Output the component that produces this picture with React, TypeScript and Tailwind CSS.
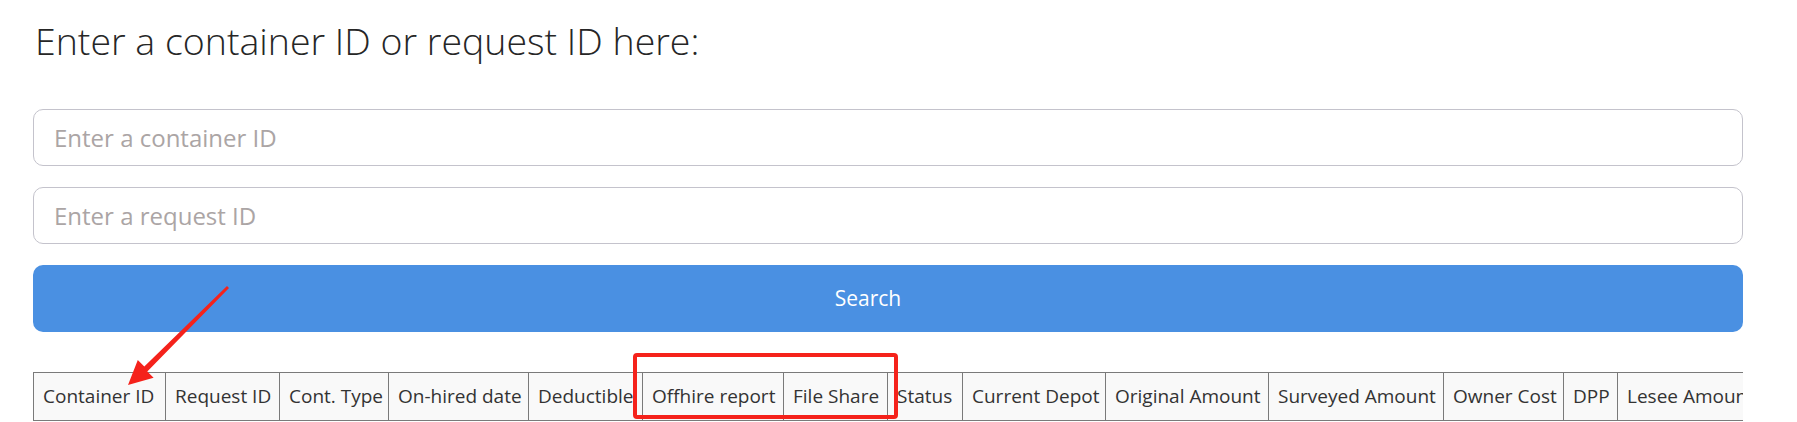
import React from "react";

// Search page: container / request ID inputs plus the header row of the results table.

const columns: { label: string; w: string }[] = [
  { label: "Container ID", w: "w-[132px]" },
  { label: "Request ID", w: "w-[114px]" },
  { label: "Cont. Type", w: "w-[109px]" },
  { label: "On-hired date", w: "w-[140px]" },
  { label: "Deductible", w: "w-[114px]" },
  { label: "Offhire report", w: "w-[141px]" },
  { label: "File Share", w: "w-[104px]" },
  { label: "Status", w: "w-[75px]" },
  { label: "Current Depot", w: "w-[143px]" },
  { label: "Original Amount", w: "w-[163px]" },
  { label: "Surveyed Amount", w: "w-[175px]" },
  { label: "Owner Cost", w: "w-[120px]" },
  { label: "DPP", w: "w-[54px]" },
  { label: "Lesee Amount", w: "w-[160px]" },
];

function Arrow() {
  // red annotation arrow pointing at the "Container ID" header
  return (
    <svg
      className="pointer-events-none absolute left-0 top-0"
      width="1797"
      height="422"
      viewBox="0 0 1797 422"
    >
      <polygon
        fill="#f5221b"
        points="229,288 147.3,371.4 153.6,377.8 128,385 137.8,360 144.3,366.6 227,286"
      />
    </svg>
  );
}

export default function App() {
  return (
    <div className="relative h-[422px] w-[1797px] overflow-hidden bg-white font-['Open_Sans',sans-serif] text-[#333]">
      <div className="pl-[33px] pr-[54px]">
        <h1 className="mt-[19px] pl-[2px] text-[37.5px] font-light leading-[44px] text-[#262626]">
          Enter a container ID or request ID here:
        </h1>

        <div className="mt-[46px] flex flex-col gap-[21px]">
          <input
            type="text"
            placeholder="Enter a container ID"
            className="h-[57px] w-full rounded-[10px] border border-[#c4c3cc] px-[20px] text-[24px] outline-none placeholder:text-[#aba5a5]"
          />
          <input
            type="text"
            placeholder="Enter a request ID"
            className="h-[57px] w-full rounded-[10px] border border-[#c4c3cc] px-[20px] text-[24px] outline-none placeholder:text-[#aba5a5]"
          />
          <button
            type="button"
            className="h-[67px] w-full rounded-[10px] bg-[#4a90e2] pr-[40px] text-[21px] text-white"
          >
            Search
          </button>
        </div>

        <div className="mt-[40px] overflow-hidden">
          <div className="flex w-max border-y border-[#7a7a7a] bg-[#f9f9f9]">
            {columns.map((c) => (
              <div
                key={c.label}
                className={`${c.w} flex h-[47px] shrink-0 items-center whitespace-nowrap border-l border-[#7a7a7a] pl-[9px] text-[19px]`}
              >
                {c.label}
              </div>
            ))}
          </div>
        </div>
      </div>

      {/* annotation box round the two new columns */}
      <div className="pointer-events-none absolute left-[633px] top-[353px] h-[66px] w-[265px] rounded-[4px] border-[4px] border-[#f5221b]" />
      <Arrow />
    </div>
  );
}
